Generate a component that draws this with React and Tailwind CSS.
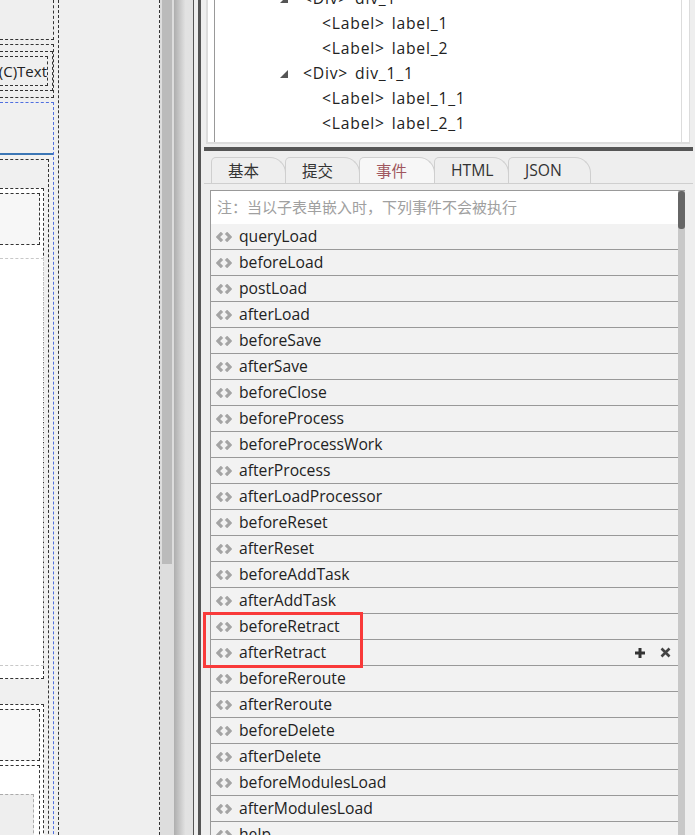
const events = ["queryLoad","beforeLoad","postLoad","afterLoad","beforeSave","afterSave","beforeClose","beforeProcess","beforeProcessWork","afterProcess","afterLoadProcessor","beforeReset","afterReset","beforeAddTask","afterAddTask","beforeRetract","afterRetract","beforeReroute","afterReroute","beforeDelete","afterDelete","beforeModulesLoad","afterModulesLoad","help"];
const FONT = "font-['Open_Sans','Noto_Sans','Noto_Sans_CJK_SC',sans-serif]";
const CJK = "font-['Noto_Sans_CJK_SC','Noto_Sans',sans-serif]";

function CodeIcon() {
  return (
    <svg width="16" height="10" viewBox="0 0 16 10" className="shrink-0">
      <path d="M6 .8 2 5l4 4.2M10 .8 14 5l-4 4.2" fill="none" stroke="#a4a4a4" strokeWidth="3.2" />
    </svg>
  );
}

function TreeRow({ indent, arrow, children }) {
  return (
    <div className={`h-[25px] flex items-center text-[15.7px] tracking-[0.8px] [word-spacing:2px] text-[#222] whitespace-nowrap ${indent}`}>
      {arrow && <svg width="8" height="8" viewBox="0 0 8 8" className="mr-[15px]"><path d="M8 0v8H0z" fill="#555" /></svg>}
      {children}
    </div>
  );
}

function Tab({ label, active, cjk, width }) {
  return (
    <div className={`relative ${width} h-[26px] -mr-px flex items-center pl-[16px] border-l border-t border-r border-[#cfcfcf] rounded-tr-[16px] rounded-tl-[5px] ${active ? "bg-[#f7f7f7] text-[#a0575f]" : "bg-[#eeeeee] text-[#333]"} ${cjk ? `text-[15.5px] ${CJK}` : "text-[15.7px]"}`}>
      {label}
    </div>
  );
}

function EventRow({ name, tools }) {
  return (
    <div className="h-[26px] shrink-0 flex items-center pl-[5px] pr-[6px] bg-[#f2f2f2] border-b border-[#999] text-[15.7px] text-[#222]">
      <CodeIcon />
      <span className="ml-[7px]">{name}</span>
      {tools && (
        <div className="ml-auto flex items-center gap-[14px] pr-[1px]">
          <svg width="12" height="12" viewBox="0 0 12 12"><path d="M6 1v10M1 6h10" stroke="#333" strokeWidth="3" /></svg>
          <svg width="11" height="11" viewBox="0 0 11 11"><path d="M1.5 1.5l8 8M9.5 1.5l-8 8" stroke="#444" strokeWidth="2.6" /></svg>
        </div>
      )}
    </div>
  );
}

const DASH = "border-dashed border-[#333]";

function Canvas() {
  return (
    <div className="w-[160px] shrink-0 h-full overflow-hidden bg-[#efefef] border-r border-dashed border-[#333]">
      <div className={`w-[59px] h-full border-r ${DASH} flex flex-col`}>
        <div className={`h-[40px] shrink-0 w-[54px] border-r border-b ${DASH}`} />
        <div className={`mt-[4px] h-[54px] shrink-0 w-[54px] border-t border-r border-b ${DASH} pt-[6px]`}>
          <div className={`h-[40px] w-[53px] border-t border-r border-b ${DASH} pt-[4px]`}>
            <div className={`h-[30px] w-[48px] border-t border-r border-b ${DASH} flex items-center justify-end overflow-hidden`}>
              <span className="text-[15px] text-[#222] font-['Open_Sans',sans-serif] leading-none whitespace-nowrap">(C)Text</span>
            </div>
          </div>
        </div>
        <div className="mt-[4px] flex-1 w-[54px] border-t border-r border-dashed border-[#4f6fe0] bg-[#f0f0f0] flex flex-col">
          <div className="h-[52px] shrink-0 border-b-[2px] border-[#3b76b5]" />
          <div className={`mt-[4px] flex-1 w-[49px] border-t border-r ${DASH} pt-[28px]`}>
            <div className={`h-[491px] w-[44px] border-t border-r border-b ${DASH} bg-white pt-[4px]`}>
              <div className={`h-[52px] w-[40px] border-t border-r border-b ${DASH} bg-[#f7f7f7]`} />
              <div className="mt-[13px] h-[408px] w-[44px] border-t border-r border-b border-dashed border-[#c8c8c8]" />
            </div>
            <div className={`mt-[25px] h-[200px] w-[44px] border-t border-r ${DASH} bg-white pt-[4px]`}>
              <div className={`h-[52px] w-[40px] border-t border-r border-b ${DASH} bg-[#f7f7f7]`} />
              <div className={`mt-[4px] h-[100px] w-[40px] border-t border-r ${DASH} pt-[28px]`}>
                <div className="h-[60px] w-[34px] border-t border-r border-dashed border-[#aaa] bg-[#eeeeee]" />
              </div>
            </div>
          </div>
        </div>
      </div>
    </div>
  );
}

export default function App() {
  return (
    <div className={`relative w-[695px] h-[835px] overflow-hidden flex bg-[#eeeeee] ${FONT}`}>
      <Canvas />
      <div className="w-[14px] shrink-0 h-full bg-[#dddddd] flex flex-col px-[2px]">
        <div className="h-[564px] bg-[#bbbbbb]" />
      </div>
      <div className="w-[20px] shrink-0 h-full border-r border-[#555] bg-gradient-to-r from-[#aeaeae] to-[#e2e2e2] to-[60%]" />
      <div className="w-[4px] shrink-0 h-full bg-[#eeeeee]" />
      <div className="w-[3px] shrink-0 h-full bg-[#555]" />
      <div className="flex-1 min-w-0 h-full flex flex-col pl-[3px] pr-[2px]">
        <div className="h-[144px] shrink-0 ml-[2px] mr-[3px] border-l-2 border-b-2 border-r border-[#dcdcdc] bg-white overflow-hidden pl-[6px] flex">
          <div className="flex-1 border-l border-r border-[#dcdcdc] border-l-[#999] -mt-[16px] pt-[2px]">
            <TreeRow indent="pl-[65px]" arrow>&lt;Div&gt; div_1</TreeRow>
            <TreeRow indent="pl-[107px]">&lt;Label&gt; label_1</TreeRow>
            <TreeRow indent="pl-[107px]">&lt;Label&gt; label_2</TreeRow>
            <TreeRow indent="pl-[65px]" arrow>&lt;Div&gt; div_1_1</TreeRow>
            <TreeRow indent="pl-[107px]">&lt;Label&gt; label_1_1</TreeRow>
            <TreeRow indent="pl-[107px]">&lt;Label&gt; label_2_1</TreeRow>
            <TreeRow indent="pl-[107px]">&lt;Label&gt; label_3_1</TreeRow>
          </div>
          <div className="w-[7px] shrink-0" />
        </div>
        <div className="mt-[3px] h-[4px] shrink-0 bg-[#555]" />
        <div className="h-[33px] shrink-0 flex items-end pl-[7px] border-b border-[#cfcfcf]">
          <Tab label="基本" cjk width="w-[75px]" />
          <Tab label="提交" cjk width="w-[75px]" />
          <Tab label="事件" active cjk width="w-[76px]" />
          <Tab label="HTML" width="w-[75px]" />
          <Tab label="JSON" width="w-[83px]" />
        </div>
        <div className="mt-[6px] ml-[6px] mr-[8px] flex-1 min-h-0 border-l border-t border-[#999] flex overflow-hidden">
          <div className="flex-1 min-w-0 flex flex-col">
            <div className={`h-[33px] shrink-0 bg-white pl-[6px] flex items-center text-[15px] text-[#a0a0a0] ${CJK}`}>注：当以子表单嵌入时，下列事件不会被执行</div>
            {events.map((e) => <EventRow key={e} name={e} tools={e === "afterRetract"} />)}
          </div>
          <div className="w-[7px] shrink-0 bg-[#c8c8c8]">
            <div className="h-[38px] bg-[#666] rounded-[3px]" />
          </div>
        </div>
      </div>
      <div className="absolute left-[203px] top-[612px] w-[160px] h-[56px] border-[3px] border-[#f93a3a]" />
    </div>
  );
}
